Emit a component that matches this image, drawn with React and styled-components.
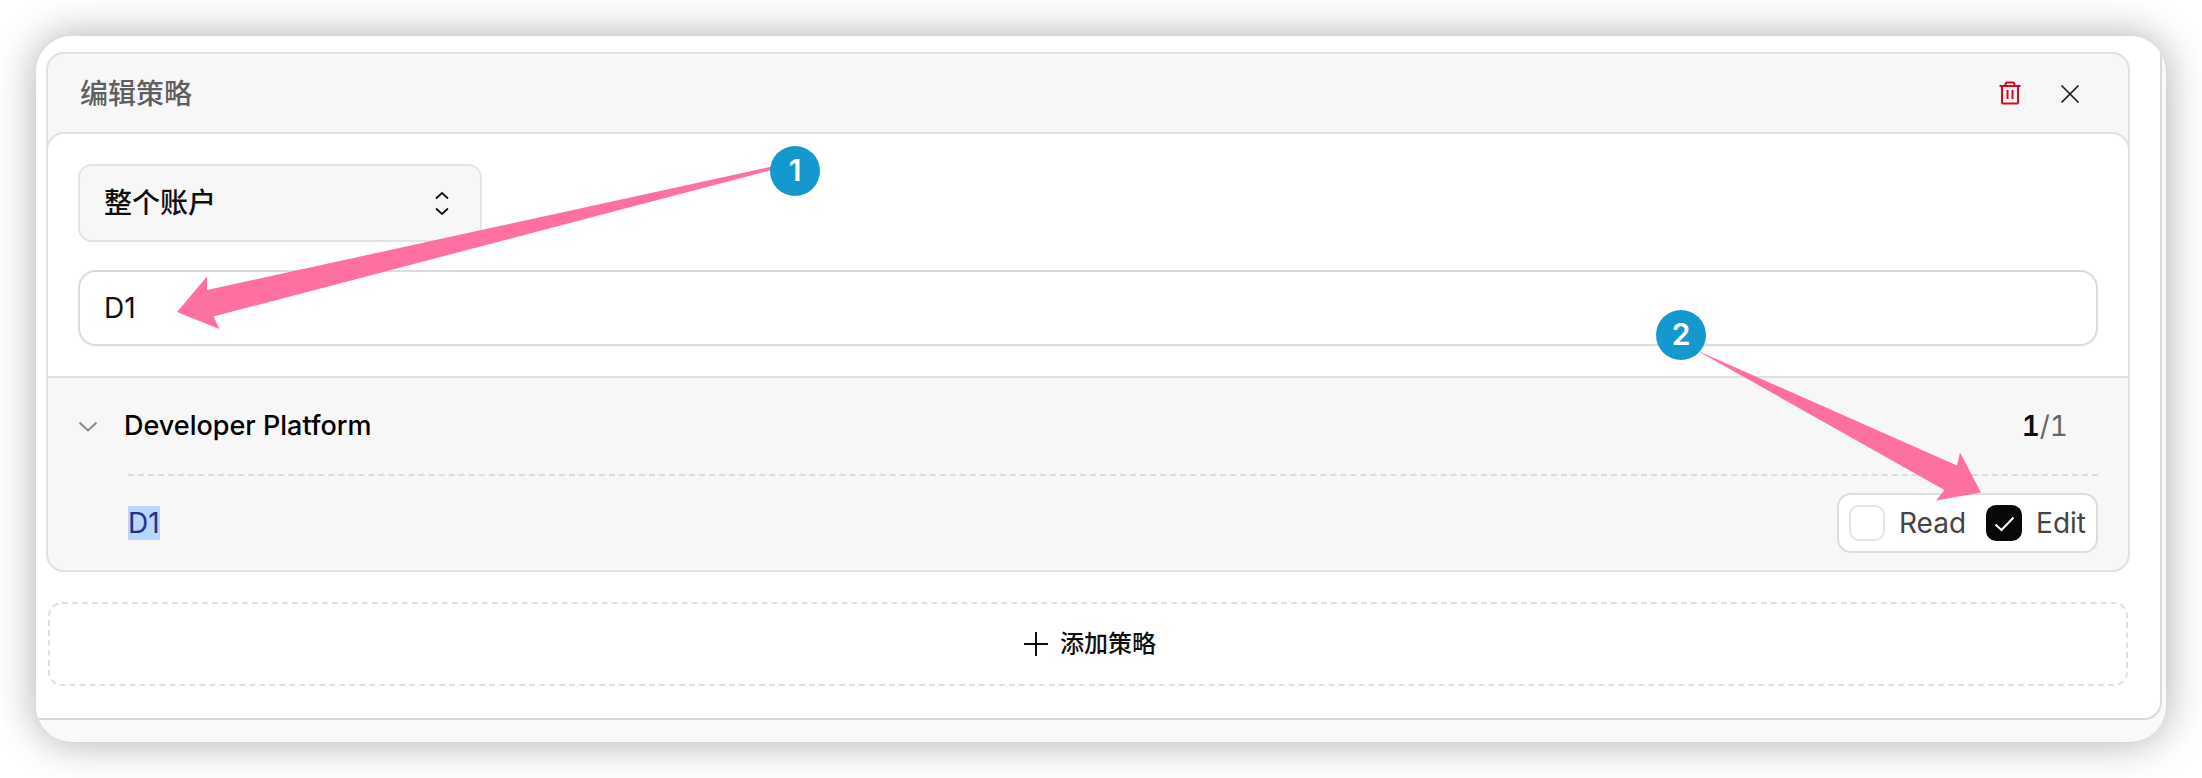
import React, { useState } from 'react';
import styled, { createGlobalStyle } from 'styled-components';

const App = () => {
  const [scope, setScope] = useState('account');
  const [query, setQuery] = useState('D1');
  const [open, setOpen] = useState(true);
  const [access, setAccess] = useState({ read: false, edit: true });

  const toggle = (e) => {
    setAccess({ ...access, [e.target.name]: e.target.checked });
  };

  return (
    <>
      <GlobalStyle />
      <Page>
        <Window>
          <Panel>
            <Card>
              <CardHeader>
                <h2>编辑策略</h2>
                <div className='actions'>
                  <IconButton type='button' aria-label='删除' $danger>
                    <TrashIcon />
                  </IconButton>
                  <IconButton type='button' aria-label='关闭'>
                    <CloseIcon />
                  </IconButton>
                </div>
              </CardHeader>

              <Filters>
                <SelectWrapper>
                  <select aria-label='范围' value={scope} onChange={(e) => setScope(e.target.value)}>
                    <option value='account'>整个账户</option>
                  </select>
                  <SortIcon />
                </SelectWrapper>
                <SearchInput
                  type='text'
                  aria-label='搜索权限'
                  value={query}
                  onChange={(e) => setQuery(e.target.value)}
                />
              </Filters>

              <Group>
                <GroupHeader type='button' aria-expanded={open} onClick={() => setOpen(!open)}>
                  <ChevronIcon />
                  <span className='name'>Developer Platform</span>
                  <span className='count'><b>1</b>/1</span>
                </GroupHeader>
                {open && (
                  <Permission>
                    <mark>D1</mark>
                    <Access>
                      <Check name='read' label='Read' checked={access.read} onChange={toggle} />
                      <Check name='edit' label='Edit' checked={access.edit} onChange={toggle} />
                    </Access>
                  </Permission>
                )}
              </Group>
            </Card>

            <AddButton type='button'>
              <PlusIcon />
              添加策略
            </AddButton>
          </Panel>

          <Arrow1 />
          <Badge $top={110} $left={734}>1</Badge>
          <Arrow2 />
          <Badge $top={274} $right={460}>2</Badge>
        </Window>
      </Page>
    </>
  );
};

const Check = ({ name, label, checked, onChange }) => (
  <CheckLabel>
    <span className='box'>
      <input type='checkbox' name={name} checked={checked} onChange={onChange} />
      {checked && (
        <svg width='36' height='36' viewBox='0 0 36 36' fill='none' stroke='#fff' strokeWidth='2'>
          <path d='M9.500 19.500l6 5.500L27.500 12.500' />
        </svg>
      )}
    </span>
    {label}
  </CheckLabel>
);

const TrashIcon = () => (
  <svg width='24' height='26' viewBox='0 0 24 26' fill='none' stroke='currentColor' strokeWidth='2'>
    <path d='M1.500 5h21M4 5v16.500Q4 22.500 5 22.500h14Q20 22.500 20 21.500V5M7.500 5V3.500Q7.500 1.500 9.500 1.500h5Q16.500 1.500 16.500 3.500V5' />
    <path d='M9.500 9v9M14.500 9v9' />
  </svg>
);

const CloseIcon = () => (
  <svg width='24' height='24' viewBox='0 0 24 24' fill='none' stroke='currentColor' strokeWidth='1.700'>
    <path d='M3.500 3.500l17 17M20.500 3.500l-17 17' />
  </svg>
);

const SortIcon = () => (
  <svg width='16' height='26' viewBox='0 0 16 26' fill='none' stroke='#111' strokeWidth='1.700'>
    <path d='M2 8.500L8 3l6 5.500M2 18.500L8 24l6-5.500' />
  </svg>
);

const ChevronIcon = () => (
  <svg width='20' height='20' viewBox='0 0 20 20' fill='none' stroke='#8a8a8a' strokeWidth='2'>
    <path d='M1.500 6.500l8.500 8 8.500-8' />
  </svg>
);

const PlusIcon = () => (
  <svg width='24' height='24' viewBox='0 0 24 24' fill='none' stroke='currentColor' strokeWidth='2'>
    <path d='M12 0v24M0 12h24' />
  </svg>
);

const Arrow1 = () => (
  <ArrowSvg $top={126} $left={136} width='604' height='172' viewBox='0 0 604 172' aria-hidden='true'>
    <path d='M5 150L35 114.500V128L600 4.500V8L41.500 154.500L47.500 167z' />
  </ArrowSvg>
);

const Arrow2 = () => (
  <ArrowSvg $top={310} $right={180} width='300' height='160' viewBox='0 0 300 160' aria-hidden='true'>
    <path d='M10 4L271 119.500L274 106.500L295 146.500L250 154.500L258.500 144z' />
  </ArrowSvg>
);

const GlobalStyle = createGlobalStyle`
  *{
    box-sizing:border-box;
  }
  body{
    margin:0;
    background:#fff;
    color:#0f0f0f;
    font-family:Inter, "Noto Sans CJK SC", sans-serif;
    font-size:28px;
    line-height:34px;
  }
  button, input, select{
    font:inherit;
    color:inherit;
    margin:0;
  }
  svg{
    display:block;
    flex-shrink:0;
  }
`;

const Page = styled.main`
  padding:36px;
`;

const Window = styled.div`
  position:relative;
  padding:0 4px 22px 0;
  background:#f9f9f9;
  border-radius:36px;
  overflow:hidden;
  box-shadow:0 0 42px rgba(0, 0, 0, 0.33);
`;

const Panel = styled.section`
  padding:16px 30px 32px 10px;
  background:#fff;
  border-right:2px solid #dadada;
  border-bottom:2px solid #dadada;
  border-bottom-right-radius:18px;
`;

const Card = styled.div`
  background:#f7f7f7;
  border:2px solid #e0e0e0;
  border-radius:18px;
`;

const CardHeader = styled.header`
  display:flex;
  align-items:center;
  justify-content:space-between;
  height:78px;
  padding:2px 38px 0 32px;

  h2{
    margin:0;
    font-size:28px;
    font-weight:500;
    color:#5f5f5f;
  }
  .actions{
    display:flex;
    gap:20px;
  }
`;

const IconButton = styled.button`
  display:flex;
  align-items:center;
  justify-content:center;
  width:40px;
  height:40px;
  padding:0;
  border:none;
  background:none;
  color:${({ $danger }) => ($danger ? '#e5001b' : '#1c1c1c')};
  cursor:pointer;
`;

const Filters = styled.div`
  display:flex;
  flex-direction:column;
  gap:28px;
  margin:0 -2px;
  padding:30px;
  background:#fff;
  border:2px solid #e0e0e0;
  border-radius:18px 18px 0 0;
`;

const SelectWrapper = styled.div`
  position:relative;
  width:404px;
  max-width:100%;

  select{
    display:block;
    width:100%;
    height:78px;
    padding:0 64px 0 24px;
    border:2px solid #e4e4e4;
    border-radius:14px;
    background:#f7f7f7;
    font-weight:500;
    appearance:none;
    outline:none;
  }
  svg{
    position:absolute;
    top:26px;
    right:32px;
    pointer-events:none;
  }
`;

const SearchInput = styled.input`
  width:100%;
  height:76px;
  padding:0 24px;
  border:2px solid #dcdcdc;
  border-radius:18px;
  background:#fff;
  box-shadow:0 1px 3px rgba(0, 0, 0, 0.05);
  outline:none;
`;

const Group = styled.div`
  padding:0 30px;
`;

const GroupHeader = styled.button`
  display:flex;
  align-items:center;
  gap:26px;
  width:100%;
  height:96px;
  padding:0 30px 0 0;
  border:none;
  background:none;
  color:#000;
  text-align:left;
  cursor:pointer;

  .name{
    flex:1;
    font-size:27px;
    font-weight:500;
  }
  .count{
    color:#666;
    font-variant-numeric:tabular-nums;
  }
  b{
    color:#0f0f0f;
    font-weight:600;
  }
`;

const Permission = styled.div`
  display:flex;
  align-items:center;
  justify-content:space-between;
  height:96px;
  margin-left:50px;
  border-top:2px dashed #dcdcdc;

  mark{
    background:#b9d6ff;
    color:#23338c;
  }
`;

const Access = styled.div`
  display:flex;
  align-items:center;
  gap:20px;
  height:60px;
  padding:0 10px;
  border:2px solid #dcdcdc;
  border-radius:14px;
  background:#fff;
`;

const CheckLabel = styled.label`
  display:flex;
  align-items:center;
  gap:14px;
  color:#444;

  .box{
    position:relative;
    width:36px;
    height:36px;
  }
  input{
    display:block;
    width:36px;
    height:36px;
    border:2px solid #e4e4e4;
    border-radius:10px;
    background:#fff;
    appearance:none;
  }
  input:checked{
    border-color:#080808;
    background:#080808;
  }
  svg{
    position:absolute;
    top:0;
    left:0;
    pointer-events:none;
  }
`;

const AddButton = styled.button`
  display:flex;
  align-items:center;
  justify-content:center;
  gap:12px;
  width:calc(100% - 4px);
  height:84px;
  margin:30px 2px 0;
  padding:0 0 0 4px;
  border:2px dashed #e0e0e0;
  border-radius:14px;
  background:#fff;
  font-size:24px;
  font-weight:500;
  cursor:pointer;
`;

const side = ({ $left, $right }) => ($right === undefined ? `left:${$left}px;` : `right:${$right}px;`);

const Badge = styled.span`
  position:absolute;
  top:${({ $top }) => $top}px;
  ${side}
  width:50px;
  height:50px;
  border-radius:50%;
  background:#1499cf;
  color:#fff;
  font-size:30px;
  font-weight:600;
  line-height:48px;
  text-align:center;
`;

const ArrowSvg = styled.svg`
  position:absolute;
  top:${({ $top }) => $top}px;
  ${side}
  fill:#ff6b9f;
  fill-opacity:0.970;
  pointer-events:none;
`;

export default App;
